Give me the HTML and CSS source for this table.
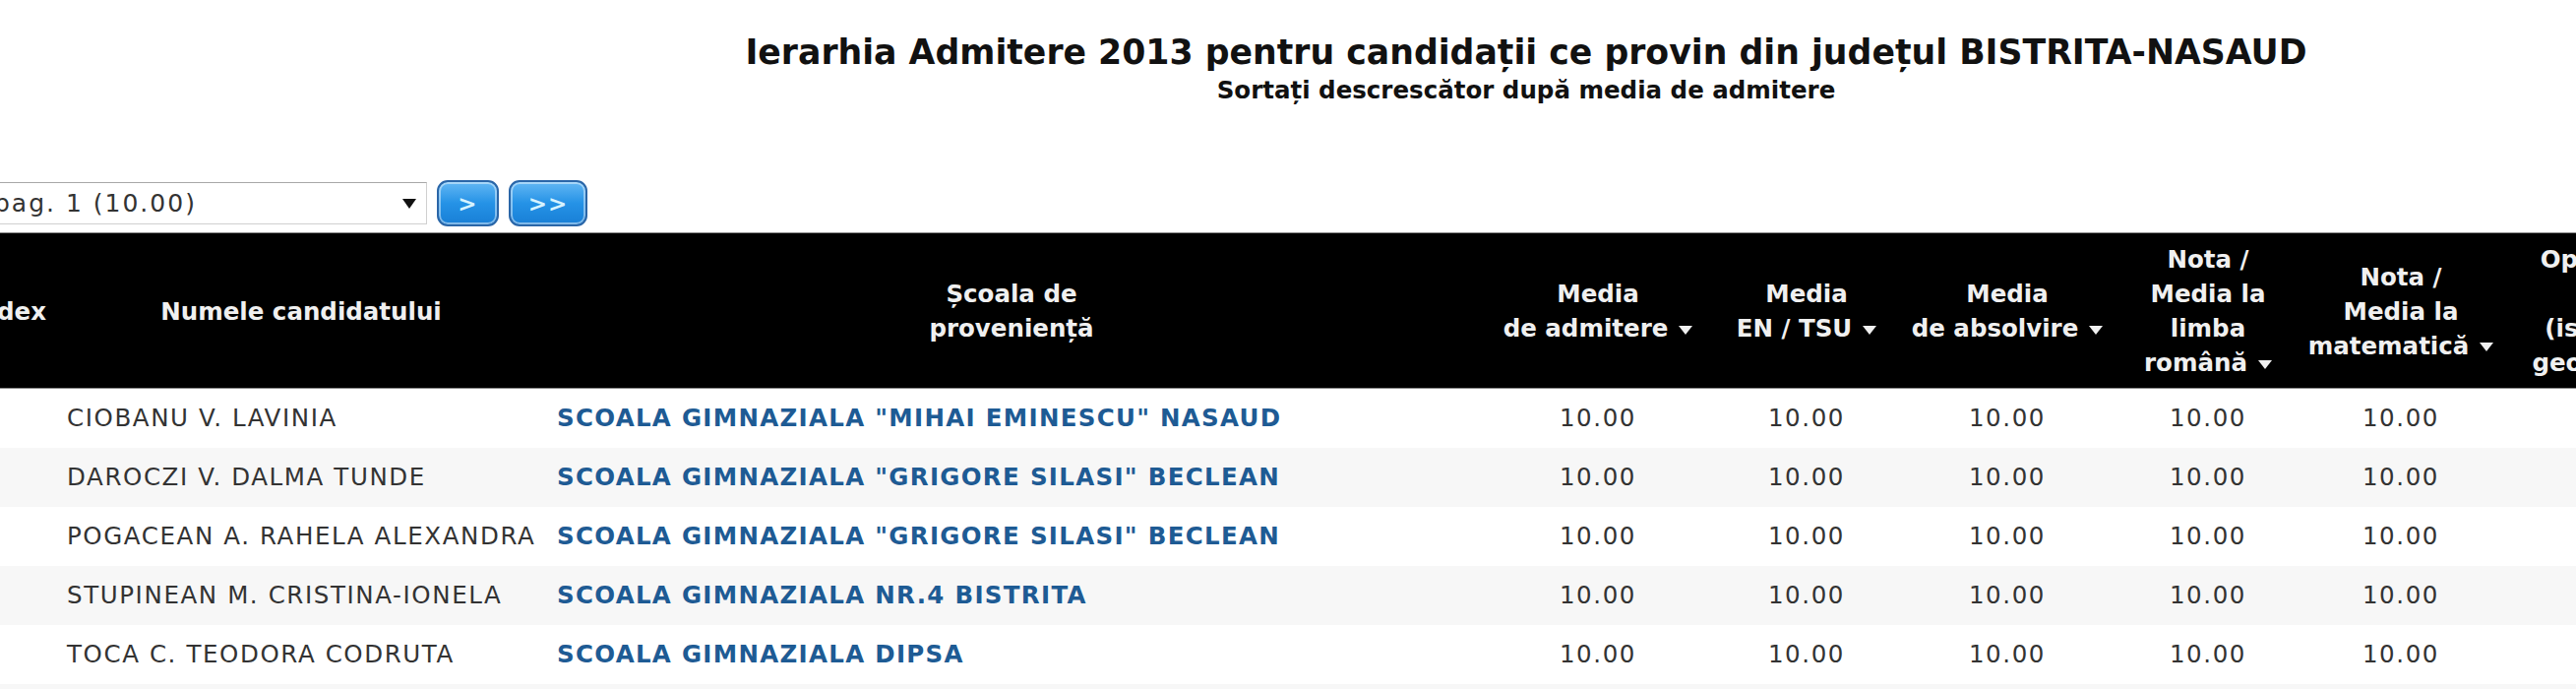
FILE: index.html
```html
<!DOCTYPE html>
<html lang="ro">
<head>
<meta charset="utf-8">
<title>Ierarhia Admitere 2013 - BISTRITA-NASAUD</title>
<link rel="stylesheet" href="styles.css">
</head>
<body>
<div class="page">
  <header class="heading">
    <h1 class="title">Ierarhia Admitere 2013 pentru candidații ce provin din județul BISTRITA-NASAUD</h1>
    <p class="subtitle">Sortați descrescător după media de admitere</p>
  </header>

  <div class="controls">
    <div class="select"><span class="select-text">pag. 1 (10.00)</span><span class="select-arrow"></span></div>
    <button class="nav-btn">&gt;</button>
    <button class="nav-btn wide">&gt;&gt;</button>
  </div>

  <table class="results">
    <colgroup>
      <col class="c-idx"><col class="c-name"><col class="c-school"><col class="c-adm"><col class="c-en"><col class="c-abs"><col class="c-ro"><col class="c-mat"><col class="c-opt"><col class="c-extra">
    </colgroup>
    <thead>
      <tr>
        <th class="th-idx">Index</th>
        <th>Numele candidatului</th>
        <th>Școala de<br>proveniență</th>
        <th>Media<br>de admitere<span class="sort"></span></th>
        <th>Media<br>EN / TSU<span class="sort"></span></th>
        <th>Media<br>de absolvire<span class="sort"></span></th>
        <th>Nota /<br>Media la<br>limba<br>română<span class="sort"></span></th>
        <th>Nota /<br>Media la<br>matematică<span class="sort"></span></th>
        <th>Opțiunea<br>la<br>(istorie /<br>geografie)</th>
        <th>Nota la<br>limba<br>maternă</th>
      </tr>
    </thead>
    <tbody>
      <tr>
        <td></td>
        <td class="name">CIOBANU V. LAVINIA</td>
        <td class="school">SCOALA GIMNAZIALA "MIHAI EMINESCU" NASAUD</td>
        <td class="num">10.00</td><td class="num">10.00</td><td class="num">10.00</td><td class="num">10.00</td><td class="num">10.00</td>
        <td></td><td></td>
      </tr>
      <tr>
        <td></td>
        <td class="name">DAROCZI V. DALMA TUNDE</td>
        <td class="school">SCOALA GIMNAZIALA "GRIGORE SILASI" BECLEAN</td>
        <td class="num">10.00</td><td class="num">10.00</td><td class="num">10.00</td><td class="num">10.00</td><td class="num">10.00</td>
        <td></td><td></td>
      </tr>
      <tr>
        <td></td>
        <td class="name">POGACEAN A. RAHELA ALEXANDRA</td>
        <td class="school">SCOALA GIMNAZIALA "GRIGORE SILASI" BECLEAN</td>
        <td class="num">10.00</td><td class="num">10.00</td><td class="num">10.00</td><td class="num">10.00</td><td class="num">10.00</td>
        <td></td><td></td>
      </tr>
      <tr>
        <td></td>
        <td class="name">STUPINEAN M. CRISTINA-IONELA</td>
        <td class="school">SCOALA GIMNAZIALA NR.4 BISTRITA</td>
        <td class="num">10.00</td><td class="num">10.00</td><td class="num">10.00</td><td class="num">10.00</td><td class="num">10.00</td>
        <td></td><td></td>
      </tr>
      <tr>
        <td></td>
        <td class="name">TOCA C. TEODORA CODRUTA</td>
        <td class="school">SCOALA GIMNAZIALA DIPSA</td>
        <td class="num">10.00</td><td class="num">10.00</td><td class="num">10.00</td><td class="num">10.00</td><td class="num">10.00</td>
        <td></td><td></td>
      </tr>
      <tr>
        <td></td><td></td><td></td><td></td><td></td><td></td><td></td><td></td><td></td><td></td>
      </tr>
    </tbody>
  </table>
</div>
</body>
</html>
```

FILE: styles.css
```css
html, body {
  margin: 0;
  padding: 0;
  overflow: hidden;
  background: #fff;
}

body {
  font-family: "DejaVu Sans", Verdana, sans-serif;
  color: #333;
}

.page {
  width: 3222px;
  margin-left: -60px;
}

/* Heading */
.heading {
  text-align: center;
  padding-top: 33px;
}

.title {
  margin: 0;
  font-size: 34.7px;
  line-height: 40px;
  font-weight: bold;
  color: #111;
}

.subtitle {
  margin: 4px 0 0;
  font-size: 24.5px;
  line-height: 30px;
  font-weight: bold;
  color: #111;
}

/* Pager controls */
.controls {
  display: flex;
  align-items: center;
  gap: 10px;
  height: 47px;
  margin-top: 76px;
  padding-left: 38px;
}

.select {
  box-sizing: border-box;
  width: 456px;
  height: 43px;
  display: flex;
  align-items: center;
  justify-content: space-between;
  padding: 0 10px 0 15px;
  background: #fff;
  border: 1px solid #d0d0d0;
  border-top-color: #a8a8a8;
  font-size: 25px;
  letter-spacing: 2px;
  color: #333;
  white-space: nowrap;
}

.select-arrow {
  width: 0;
  height: 0;
  border-left: 7.5px solid transparent;
  border-right: 7.5px solid transparent;
  border-top: 10px solid #111;
}

.nav-btn {
  box-sizing: border-box;
  width: 63px;
  height: 47px;
  padding: 0;
  border: 2px solid #2a66a8;
  border-radius: 11px;
  background: linear-gradient(#62b7f4, #2592e6 50%, #187fd6);
  box-shadow: inset 0 0 0 2px rgba(255, 255, 255, 0.45);
  color: #d6f3ff;
  font-family: "DejaVu Sans", Verdana, sans-serif;
  font-size: 23px;
  font-weight: bold;
  letter-spacing: 1px;
}

.nav-btn.wide {
  width: 80px;
}

/* Results table */
.results {
  margin-top: 6px;
  width: 3222px;
  border-collapse: collapse;
  table-layout: fixed;
}

.c-idx { width: 118px; }
.c-name { width: 496px; }
.c-school { width: 948px; }
.c-adm { width: 244px; }
.c-en { width: 180px; }
.c-abs { width: 228px; }
.c-ro { width: 180px; }
.c-mat { width: 212px; }
.c-opt { width: 198px; }
.c-extra { width: 418px; }

.results thead tr {
  border-top: 1px solid #8a8a8a;
  border-bottom: 1px solid #8a8a8a;
}

.results th {
  background: #000;
  color: #f0f0f0;
  font-size: 24.5px;
  font-weight: bold;
  line-height: 35px;
  padding: 9px 4px 8px;
  text-align: center;
  vertical-align: middle;
  white-space: nowrap;
}

.results th.th-idx {
  text-align: right;
  padding-right: 11px;
}

.sort {
  display: inline-block;
  width: 0;
  height: 0;
  margin-left: 11px;
  border-left: 7px solid transparent;
  border-right: 7px solid transparent;
  border-top: 9px solid #f0f0f0;
  vertical-align: middle;
}

.results tbody tr {
  height: 60px;
}

.results tbody tr:nth-child(even) {
  background: #f7f7f7;
}

.results td {
  padding: 0;
  font-size: 24.5px;
  vertical-align: middle;
  white-space: nowrap;
  color: #333;
}

.results td.name {
  padding-left: 10px;
  letter-spacing: 1.6px;
}

.results td.school {
  padding-left: 12px;
  font-weight: bold;
  letter-spacing: 1.3px;
  color: #1e5b94;
}

.results td.num {
  text-align: center;
  letter-spacing: 1.6px;
}
```
